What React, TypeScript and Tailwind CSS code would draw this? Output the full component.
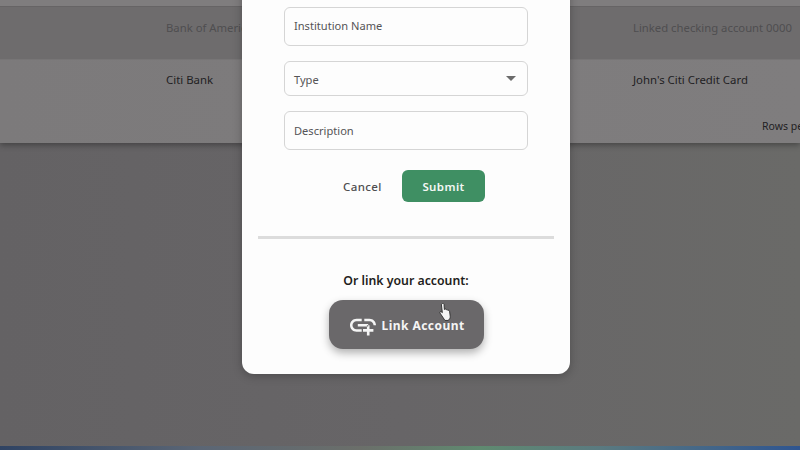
export default function App() {
  const font = { fontFamily: '"Noto Sans", "Open Sans", sans-serif' };
  return (
    <div style={font} className="relative w-[800px] h-[450px] overflow-hidden bg-[linear-gradient(90deg,#646264_0%,#676567_50%,#6a6a68_100%)] flex flex-col">
      <div className="h-[143px] shrink-0 flex flex-col bg-[linear-gradient(90deg,#7c7a7b_0%,#7f7d7e_100%)] shadow-[0_2px_6px_rgba(0,0,0,0.35)]">
        <div className="h-[7px] bg-[#7f7d7e] border-b border-[#666465]" />
        <div className="h-[53px] flex bg-[#6e6c6d] border-b border-[#777576] text-[11.3px] text-[#4f4e50]">
          <div className="w-[166px]" />
          <div className="w-[467px] pt-[12px] leading-[17px]">Bank of America</div>
          <div className="pt-[12px] leading-[17px] whitespace-nowrap">Linked checking account 0000</div>
        </div>
        <div className="h-[40px] flex text-[11.4px] text-[#222123]">
          <div className="w-[166px]" />
          <div className="w-[467px] pt-[11px] leading-[17px]">Citi Bank</div>
          <div className="pt-[11px] leading-[17px] whitespace-nowrap">John's Citi Credit Card</div>
        </div>
        <div className="flex-1 flex text-[10.5px] text-[#222123]">
          <div className="w-[762px] shrink-0" />
          <div className="pt-[19px] leading-[14px] whitespace-nowrap">Rows per page</div>
        </div>
      </div>
      <div className="flex-1" />
      <div className="h-[4px] bg-[linear-gradient(90deg,#2f4363_0%,#5b6675_25%,#6b6f6a_45%,#5f8a70_60%,#5a7a80_75%,#2f5590_100%)]" />

      <div className="absolute left-[242px] top-[-20px] w-[328px] h-[394px] bg-[#fdfdfd] rounded-xl shadow-[0_2px_10px_rgba(0,0,0,0.25)] flex flex-col items-center pt-[27px]">
        <div className="w-[244px] h-[39px] shrink-0 border border-[#d5d5d5] rounded-md flex items-center px-[9px] text-[11.1px] text-[#555456]">Institution Name</div>
        <div className="mt-[15px] w-[244px] h-[35px] shrink-0 border border-[#d5d5d5] rounded-md flex items-center justify-between pl-[9px] pr-[11px] text-[11.1px] text-[#555456]">
          <span className="pt-[4px]">Type</span>
          <span className="mb-[1px] w-0 h-0 border-l-[5px] border-r-[5px] border-t-[5px] border-l-transparent border-r-transparent border-t-[#6b6b6b]" />
        </div>
        <div className="mt-[15px] w-[244px] h-[39px] shrink-0 border border-[#d5d5d5] rounded-md flex items-center px-[9px] pt-[1px] text-[11.1px] text-[#555456]">Description</div>
        <div className="mt-[20px] w-[244px] h-[32px] shrink-0 flex items-center">
          <div className="w-[118px] pl-[59px] pt-[2px] text-[11.5px] font-medium tracking-[0.4px] text-[#4f4e50]">Cancel</div>
          <div className="w-[83px] h-[32px] pt-[2px] bg-[#3f8f63] rounded-md flex items-center justify-center text-[11.5px] font-semibold tracking-[0.4px] text-[#f4f8f5]">Submit</div>
        </div>
        <div className="mt-[34px] w-[296px] h-[3px] shrink-0 bg-[#dcdcdc]" />
        <div className="mt-[33px] text-[12.3px] leading-[18px] font-semibold text-[#1f1e20] whitespace-nowrap">Or link your account:</div>
        <div className="relative mt-[10px] w-[155px] h-[49px] shrink-0 bg-[#6a686a] rounded-[14px] shadow-[0_4px_8px_rgba(0,0,0,0.3)] flex items-center pl-[21px] gap-[6px] text-[#f5f5f5]">
          <svg viewBox="2 5 20 16" width="26" height="21" fill="currentColor" className="shrink-0 mt-[4px]">
            <path d="M8 11h8v2H8zm12.1 1H22c0-2.76-2.24-5-5-5h-4v1.9h4c1.71 0 3.1 1.39 3.1 3.1zM3.9 12c0-1.71 1.39-3.1 3.1-3.1h4V7H7c-2.76 0-5 2.24-5 5s2.24 5 5 5h4v-1.9H7c-1.71 0-3.1-1.39-3.1-3.1zM17 12h-2v3h-3v2h3v3h2v-3h3v-2h-3z" />
          </svg>
          <span className="pt-[2px] text-[12px] font-bold tracking-[0.45px] whitespace-nowrap">Link Account</span>
          <svg viewBox="1.5 1 11 16" width="13" height="18" className="absolute left-[110px] top-[3px]">
            <path d="M4 1.5c.8-.6 1.6 0 1.7.8l.3 4.5.5-.3c.6-.3 1.2 0 1.3.5.6-.3 1.3 0 1.4.6.6-.3 1.3 0 1.4.7l.6 4.5c.1 1.5-.6 3-1.9 3.7H6.5L2.2 10c-.5-.7 0-1.6 1-1.2l1 .8-.8-6.8c-.1-.5.2-1 .6-1.3z" fill="#f5f5f5" stroke="#2a2a2a" strokeWidth="0.8" />
          </svg>
        </div>
      </div>
    </div>
  );
}
